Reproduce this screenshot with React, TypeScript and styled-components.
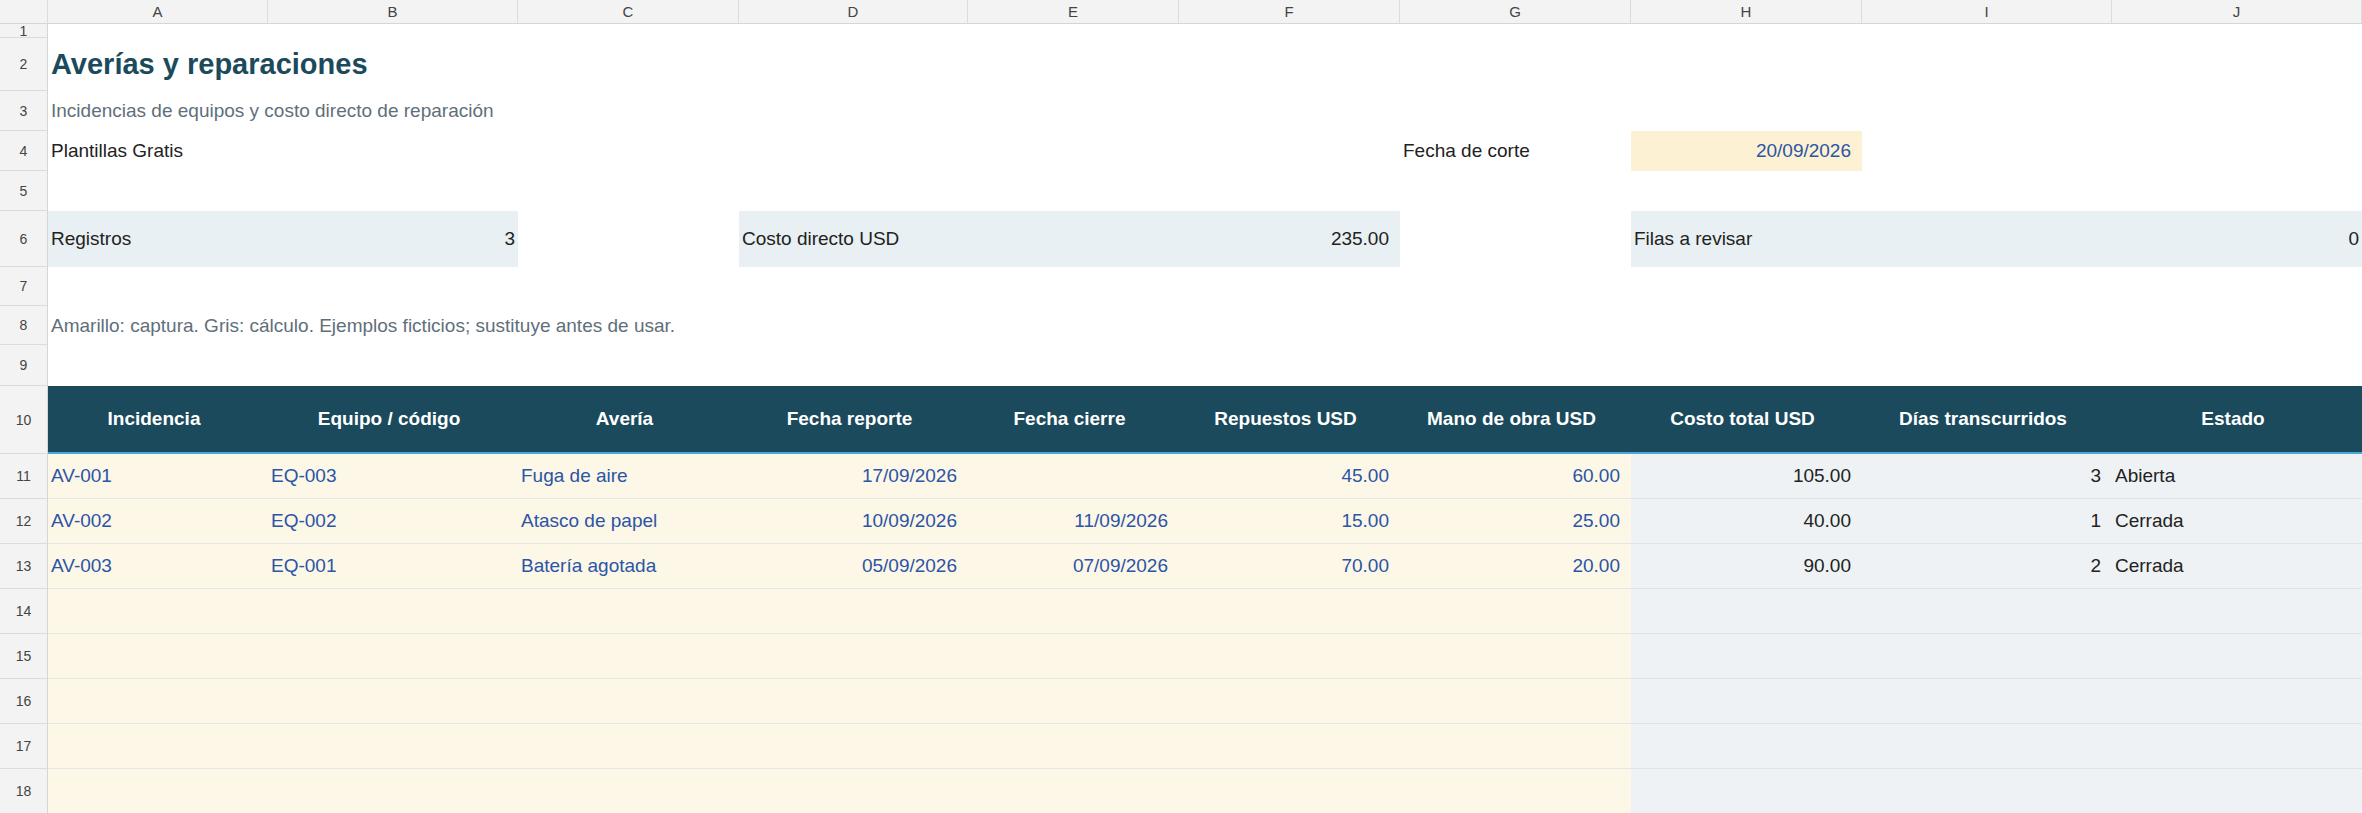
import React from 'react'
import styled, { createGlobalStyle, css } from 'styled-components'

const Global = createGlobalStyle`
  body { margin: 0; background: #fff; font-family: "Liberation Sans", Arial, sans-serif; }
`

const COLS = [48, 220, 250, 221, 229, 211, 221, 231, 231, 250, 250]
const ROWS = [24, 14, 53, 40, 40, 40, 56, 39, 39, 41, 68, 45, 45, 45, 45, 45, 45, 45, 45]
const LETTERS = ['A', 'B', 'C', 'D', 'E', 'F', 'G', 'H', 'I', 'J']

const Sheet = styled.div`
  display: grid;
  grid-template-columns: ${COLS.map(c => c + 'px').join(' ')};
  grid-template-rows: ${ROWS.map(r => r + 'px').join(' ')};
  width: 2362px;
  overflow: hidden;
`

const ColHead = styled.div<{ $c: number }>`
  grid-row: 1;
  grid-column: ${p => p.$c};
  background: #f3f3f3;
  border-right: 1px solid #dcdcdc;
  border-bottom: 1px solid #d6d6d6;
  display: flex;
  align-items: center;
  justify-content: center;
  font-size: 15px;
  color: #444;
`

const RowHead = styled.div<{ $r: number }>`
  grid-column: 1;
  grid-row: ${p => p.$r};
  background: #f3f3f3;
  border-right: 1px solid #d6d6d6;
  border-bottom: 1px solid #dcdcdc;
  display: flex;
  align-items: center;
  justify-content: center;
  font-size: 14px;
  color: #444;
`

type Kind = 'plain' | 'title' | 'sub' | 'note' | 'sum' | 'date' | 'head' | 'input' | 'calc'

const kinds: Record<Kind, ReturnType<typeof css>> = {
  plain: css`color: #222;`,
  title: css`color: #1b4a5c; font-size: 29px; font-weight: 700;`,
  sub: css`color: #5f6f7a;`,
  note: css`color: #5f6f7a;`,
  sum: css`color: #222; background: #e8f0f3;`,
  date: css`color: #2b55a5; background: #fdf1d3;`,
  head: css`color: #fff; background: #1b4a5c; font-weight: 700; border-bottom: 2px solid #4aa8d8;`,
  input: css`color: #2b55a5; background: #fdf7e7; border-bottom: 1px solid #e6e6e6;`,
  calc: css`color: #222; background: #eef2f5; border-bottom: 1px solid #e3e3e3;`,
}

const Cell = styled.div<{ $r: number; $c: number; $span?: number; $k?: Kind; $align?: 'left' | 'right' | 'center' }>`
  grid-row: ${p => p.$r};
  grid-column: ${p => p.$c} / span ${p => p.$span ?? 1};
  display: flex;
  align-items: center;
  justify-content: ${p => (p.$align === 'right' ? 'flex-end' : p.$align === 'center' ? 'center' : 'flex-start')};
  padding: 0 11px 0 3px;
  font-size: 19px;
  white-space: nowrap;
  overflow: hidden;
  ${p => kinds[p.$k ?? 'plain']}
`

const headers = ['Incidencia', 'Equipo / código', 'Avería', 'Fecha reporte', 'Fecha cierre', 'Repuestos USD', 'Mano de obra USD', 'Costo total USD', 'Días transcurridos', 'Estado']

const data = [
  ['AV-001', 'EQ-003', 'Fuga de aire', '17/09/2026', '', '45.00', '60.00', '105.00', '3', 'Abierta'],
  ['AV-002', 'EQ-002', 'Atasco de papel', '10/09/2026', '11/09/2026', '15.00', '25.00', '40.00', '1', 'Cerrada'],
  ['AV-003', 'EQ-001', 'Batería agotada', '05/09/2026', '07/09/2026', '70.00', '20.00', '90.00', '2', 'Cerrada'],
  ['', '', '', '', '', '', '', '', '', ''],
  ['', '', '', '', '', '', '', '', '', ''],
  ['', '', '', '', '', '', '', '', '', ''],
  ['', '', '', '', '', '', '', '', '', ''],
  ['', '', '', '', '', '', '', '', '', ''],
]

export default function App() {
  return (
    <>
      <Global />
      <Sheet>
        <ColHead $c={1} />
        {LETTERS.map((l, i) => <ColHead key={l} $c={i + 2}>{l}</ColHead>)}
        {ROWS.slice(1).map((_, i) => <RowHead key={i} $r={i + 2}>{i + 1}</RowHead>)}

        <Cell $r={3} $c={2} $span={5} $k="title">Averías y reparaciones</Cell>
        <Cell $r={4} $c={2} $span={5} $k="sub">Incidencias de equipos y costo directo de reparación</Cell>
        <Cell $r={5} $c={2} $span={3}>Plantillas Gratis</Cell>
        <Cell $r={5} $c={8}>Fecha de corte</Cell>
        <Cell $r={5} $c={9} $k="date" $align="right">20/09/2026</Cell>

        <Cell $r={7} $c={2} $k="sum">Registros</Cell>
        <Cell $r={7} $c={3} $k="sum" $align="right" style={{ paddingRight: 3 }}>3</Cell>
        <Cell $r={7} $c={5} $span={2} $k="sum">Costo directo USD</Cell>
        <Cell $r={7} $c={7} $k="sum" $align="right">235.00</Cell>
        <Cell $r={7} $c={9} $span={2} $k="sum">Filas a revisar</Cell>
        <Cell $r={7} $c={11} $k="sum" $align="right" style={{ paddingRight: 3 }}>0</Cell>

        <Cell $r={9} $c={2} $span={6} $k="note">Amarillo: captura. Gris: cálculo. Ejemplos ficticios; sustituye antes de usar.</Cell>

        {headers.map((h, i) => (
          <Cell key={h} $r={11} $c={i + 2} $k="head" $align="center">{h}</Cell>
        ))}

        {data.map((row, ri) =>
          row.map((v, ci) => (
            <Cell
              key={ri + '-' + ci}
              $r={12 + ri}
              $c={ci + 2}
              $k={ci < 7 ? 'input' : 'calc'}
              $align={ci < 3 || ci === 9 ? 'left' : 'right'}
            >
              {v}
            </Cell>
          ))
        )}
      </Sheet>
    </>
  )
}
